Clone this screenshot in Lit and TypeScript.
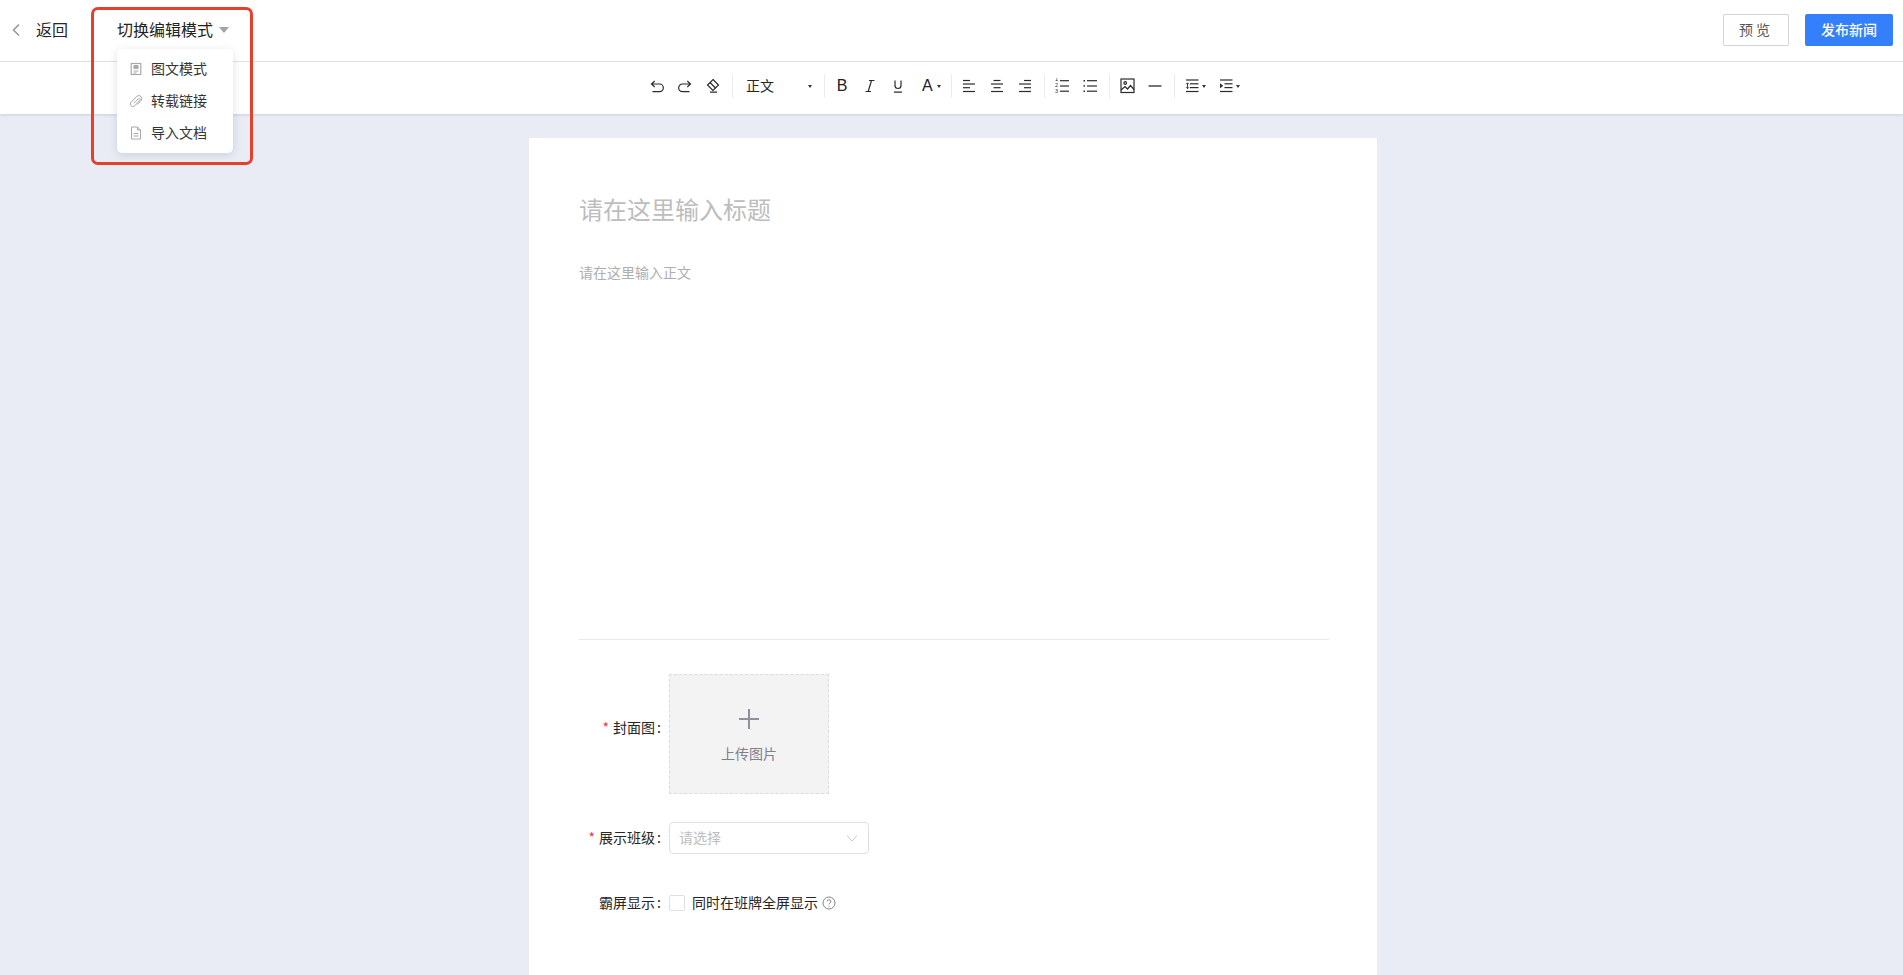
import { LitElement, html, css, svg } from "lit";
import { customElement } from "lit/decorators.js";

const ic = (body: unknown) =>
  html`<svg width="16" height="16" viewBox="0 0 16 16" fill="none" stroke="#2b2b2b" stroke-width="1.2">${body}</svg>`;

const lines = (rows: [number, number, number][]) =>
  rows.map(([y, a, b]) => svg`<path d="M${a} ${y}H${b}"/>`);

const nums = [
  [3.4, "1"],
  [9, "2"],
  [14.6, "3"],
].map(
  ([y, t]) =>
    svg`<text x="1" y=${y} font-size="5.5" fill="#2b2b2b" stroke="none" font-family="Liberation Sans">${t}</text>`
);

@customElement("app-root")
export class AppRoot extends LitElement {
  static styles = css`
    :host {
      display: block;
      width: 100%;
      height: 975px;
      overflow: hidden;
      position: relative;
      background: #e9ecf5;
      font-family: "Noto Sans CJK SC", "Noto Sans", sans-serif;
      color: #262626;
    }
    .top {
      height: 62px;
      box-sizing: border-box;
      background: #fff;
      border-bottom: 1px solid #e6e6e6;
      display: flex;
      align-items: center;
      padding: 0 10px 1px;
    }
    .back {
      display: flex;
      align-items: center;
      gap: 14px;
      font-size: 16px;
      margin-right: 49px;
      color: #262626;
    }
    .lift { margin-bottom: 2px; }
    .mode {
      display: flex;
      align-items: center;
      gap: 6px;
      font-size: 16px;
      color: #222;
    }
    .caret {
      width: 0;
      height: 0;
      border-left: 5px solid transparent;
      border-right: 5px solid transparent;
      border-top: 6px solid #a3a3a3;
    }
    .spacer { flex: 1; }
    .btn {
      height: 32px;
      box-sizing: border-box;
      border-radius: 2px;
      font-size: 14px;
      display: flex;
      align-items: center;
      justify-content: center;
    }
    .preview {
      width: 66px;
      border: 1px solid #d4d4d4;
      color: #555;
      margin-right: 16px;
      letter-spacing: 3px;
    }
    .publish {
      width: 88px;
      background: #347ffb;
      color: #fff;
      font-weight: 500;
    }
    .tools {
      height: 52px;
      box-sizing: border-box;
      background: #fff;
      box-shadow: 0 1px 3px rgba(0, 0, 0, 0.12);
      display: flex;
      align-items: center;
      justify-content: center;
      position: relative;
      padding: 0 14px 4px 0;
    }
    .tool {
      width: 28px;
      height: 24px;
      display: flex;
      align-items: center;
      justify-content: center;
    }
    .tool.wide {
      width: 34px;
      justify-content: flex-start;
      padding-left: 6px;
      box-sizing: border-box;
      gap: 2px;
    }
    .tool.letter {
      width: 34px;
      justify-content: flex-start;
      padding-left: 10px;
      box-sizing: border-box;
      gap: 4px;
    }
    .sep {
      width: 1px;
      height: 24px;
      background: #ececec;
      margin: 0 3px 0 5px;
    }
    .para {
      width: 83px;
      display: flex;
      align-items: center;
      justify-content: space-between;
      padding: 0 7px 0 10px;
      box-sizing: border-box;
      font-size: 14px;
      color: #262626;
    }
    .mini {
      width: 0;
      height: 0;
      border-left: 2px solid transparent;
      border-right: 2px solid transparent;
      border-top: 3px solid #333;
    }
    .glyph {
      font-family: "Liberation Sans", sans-serif;
      font-size: 16px;
      color: #222;
      line-height: 1;
    }
    .stage {
      display: flex;
      justify-content: center;
      padding: 24px 0 0 3px;
    }
    .card {
      width: 848px;
      background: #fff;
      border-radius: 2px;
      height: 900px;
      padding: 0 48px 0 50px;
      box-sizing: border-box;
    }
    .title {
      font-size: 24px;
      line-height: 36px;
      color: #bdbdbd;
      padding-top: 53px;
    }
    .body {
      font-size: 14px;
      line-height: 22px;
      color: #aeaeae;
      padding-top: 34px;
      height: 378px;
    }
    .rule {
      height: 1px;
      background: #e8e8e8;
    }
    .row {
      display: flex;
      align-items: center;
    }
    .label {
      width: 82px;
      margin-right: 8px;
      text-align: right;
      font-size: 14px;
      color: #262626;
      white-space: nowrap;
    }
    .req { color: #f0353c; margin-right: 4px; }
    .colon { margin-left: 2px; }
    .upload {
      width: 160px;
      height: 120px;
      box-sizing: border-box;
      background: #f3f3f4;
      border: 1px dashed #dcdcdc;
      display: flex;
      flex-direction: column;
      align-items: center;
      color: #7d7f8c;
      font-size: 14px;
      padding-top: 34px;
    }
    .upload span { margin-top: 14px; line-height: 20px; }
    .select {
      width: 200px;
      height: 32px;
      box-sizing: border-box;
      border: 1px solid #dcdfe6;
      border-radius: 4px;
      display: flex;
      align-items: center;
      justify-content: space-between;
      padding: 0 10px 0 9px;
      font-size: 14px;
      color: #bdbdbd;
    }
    .check {
      width: 16px;
      height: 16px;
      box-sizing: border-box;
      border: 1px solid #dcdfe6;
      border-radius: 2px;
      margin-right: 7px;
    }
    .help { margin-left: 4px; display: flex; }
    .txt { font-size: 14px; color: #262626; }
    .r1 { margin-top: 34px; align-items: flex-start; }
    .r1 .label { margin-top: 42px; line-height: 22px; }
    .r2 { margin-top: 28px; }
    .r3 { margin-top: 33px; height: 32px; }
    .menu {
      position: absolute;
      left: 117px;
      top: 49px;
      width: 116px;
      height: 104px;
      background: #fff;
      border-radius: 5px;
      box-shadow: 0 2px 10px rgba(0, 0, 0, 0.12);
      padding: 4px 0;
      box-sizing: border-box;
      z-index: 2;
    }
    .item {
      height: 32px;
      display: flex;
      align-items: center;
      font-size: 14px;
      color: #333;
      padding-left: 12px;
      gap: 8px;
    }
    .mark {
      position: absolute;
      left: 91px;
      top: 7px;
      width: 162px;
      height: 158px;
      box-sizing: border-box;
      border: 3px solid #e5402b;
      border-radius: 7px;
      z-index: 3;
      pointer-events: none;
    }
  `;

  private tool(body: unknown, kind = "") {
    return html`<div class="tool ${kind}">${body}${kind ? html`<i class="mini"></i>` : ""}</div>`;
  }

  render() {
    const grey = "#a8a8a8";
    return html`
      <div class="top">
        <div class="back">
          <svg width="12" height="16" viewBox="0 0 12 16" fill="none" stroke="#999" stroke-width="1.6"><path d="M9 2.500 3.500 8 9 13.500" /></svg>
          <span class="lift">返回</span>
        </div>
        <div class="mode"><span class="lift">切换编辑模式</span><i class="caret"></i></div>
        <div class="spacer"></div>
        <div class="btn preview"><span class="lift">预览</span></div>
        <div class="btn publish"><span class="lift">发布新闻</span></div>
      </div>

      <div class="tools">
        ${this.tool(ic(svg`<path d="M2.500 6H10.500a3.850 3.850 0 0 1 0 7.700H3.500M5.700 3 2.500 6l3.200 3"/>`))}
        ${this.tool(ic(svg`<path d="M13.500 6H5.500a3.850 3.850 0 0 0 0 7.700H12.500M10.300 3l3.200 3-3.200 3"/>`))}
        ${this.tool(ic(svg`<path d="m8 1.500 5.500 5.500L8 12.500 2.500 7zM5 14.200h7"/><path d="m5 4.500 5.500 5.500"/>`))}
        <div class="sep"></div>
        <div class="para"><span class="lift">正文</span><i class="mini"></i></div>
        <div class="sep"></div>
        ${this.tool(html`<span class="glyph">B</span>`)}
        ${this.tool(ic(svg`<path d="M7 2.500h5.500M3.500 13.500H9M9.500 2.500 6.200 13.500"/>`))}
        ${this.tool(ic(svg`<path d="M5 2.500v5a3 3 0 0 0 6 0v-5M4 14.200h8"/>`))}
        ${this.tool(html`<span class="glyph">A</span>`, "letter")}
        <div class="sep"></div>
        ${this.tool(ic(lines([[2.500, 2, 9], [6, 2, 14], [9.700, 2, 9], [13.500, 2, 14]])))}
        ${this.tool(ic(lines([[2.500, 4.500, 11.500], [6, 2, 14], [9.700, 4.500, 11.500], [13.500, 2, 14]])))}
        ${this.tool(ic(lines([[2.500, 7, 14], [6, 2, 14], [9.700, 7, 14], [13.500, 2, 14]])))}
        <div class="sep"></div>
        ${this.tool(ic(svg`${nums}${lines([[2.700, 6, 15], [8, 6, 15], [13.200, 6, 15]])}`))}
        ${this.tool(ic(svg`${lines([[2.700, 5, 15], [8, 5, 15], [13.200, 5, 15]])}<path d="M1.500 2.700h1.500M1.500 8h1.500M1.500 13.200h1.500" stroke-width="1.400"/>`))}
        <div class="sep"></div>
        ${this.tool(ic(svg`<rect x="2" y="1" width="13" height="13.500"/><circle cx="6.200" cy="5" r="1.300"/><path d="m2 12 4-3.500 2.500 2.500 3-3.500 3.500 4"/>`))}
        ${this.tool(ic(svg`<path d="M1.500 8h13" stroke-width="1.300"/>`))}
        <div class="sep"></div>
        ${this.tool(ic(svg`${lines([[2, 2, 14.500], [5.800, 6, 14.500], [9.600, 6, 14.500], [13.500, 2, 14.500]])}<path d="M3.500 5v5.500M2 6.300l1.500-1.500L5 6.300M2 9.200l1.500 1.500L5 9.200" stroke-width=".9"/>`), "wide")}
        ${this.tool(ic(svg`${lines([[2, 2, 14.500], [5.800, 6.500, 14.500], [9.600, 6.500, 14.500], [13.500, 2, 14.500]])}<path d="m2 5.200 3.200 2.500L2 10.200z" fill="#2b2b2b" stroke="none"/>`), "wide")}
      </div>

      <div class="stage">
        <div class="card">
          <div class="title">请在这里输入标题</div>
          <div class="body">请在这里输入正文</div>
          <div class="rule"></div>

          <div class="row r1">
            <div class="label"><span class="req">*</span>封面图<span class="colon">:</span></div>
            <div class="upload">
              <svg width="20" height="20" viewBox="0 0 20 20" stroke="#8e909c" stroke-width="2"><path d="M10 0v20M0 10h20" /></svg>
              <span>上传图片</span>
            </div>
          </div>
          <div class="row r2">
            <div class="label lift"><span class="req">*</span>展示班级<span class="colon">:</span></div>
            <div class="select">
              <span class="lift">请选择</span>
              <svg width="12" height="12" viewBox="0 0 12 12" fill="none" stroke="#c4c6cc"><path d="m1 3.500 5 5.500 5-5.500" /></svg>
            </div>
          </div>
          <div class="row r3">
            <div class="label lift">霸屏显示<span class="colon">:</span></div>
            <div class="check"></div>
            <span class="txt lift">同时在班牌全屏显示</span>
            <span class="help">
              <svg width="14" height="14" viewBox="0 0 14 14" fill="none" stroke="#777" stroke-width=".9">
                <circle cx="7" cy="7" r="6" />
                <path d="M5.200 5.500a1.800 1.800 0 1 1 2.600 1.600c-.6.300-.8.700-.8 1.300M7 9.700v1" />
              </svg>
            </span>
          </div>
        </div>
      </div>

      <div class="menu">
        <div class="item">
          <svg width="14" height="14" viewBox="0 0 14 14" fill="none" stroke=${grey} stroke-width="1.200">
            <rect x="2.200" y="1.500" width="9.600" height="11" />
            <rect x="4.500" y="3" width="5" height="4" fill=${grey} stroke="none" />
            <path d="M4.500 9h5M4.500 11h3" />
          </svg>
          <span class="lift">图文模式</span>
        </div>
        <div class="item">
          <svg width="14" height="14" viewBox="0 0 14 14" fill="none" stroke=${grey}>
            <path d="M5 9.200 9.300 4.900a1.100 1.100 0 0 1 1.600 1.600L5.300 12a2.500 2.500 0 0 1-3.500-3.500L8 2.200a3 3 0 0 1 4.200 4.200L8 10.600" />
          </svg>
          <span class="lift">转载链接</span>
        </div>
        <div class="item">
          <svg width="14" height="14" viewBox="0 0 14 14" fill="none" stroke=${grey}>
            <path d="M2.500 1h6l3 3v9h-9zM8.500 1v3h3" />
            <path d="M4.500 7.500h5M4.500 10h5" />
          </svg>
          <span class="lift">导入文档</span>
        </div>
      </div>
      <div class="mark"></div>
    `;
  }
}
